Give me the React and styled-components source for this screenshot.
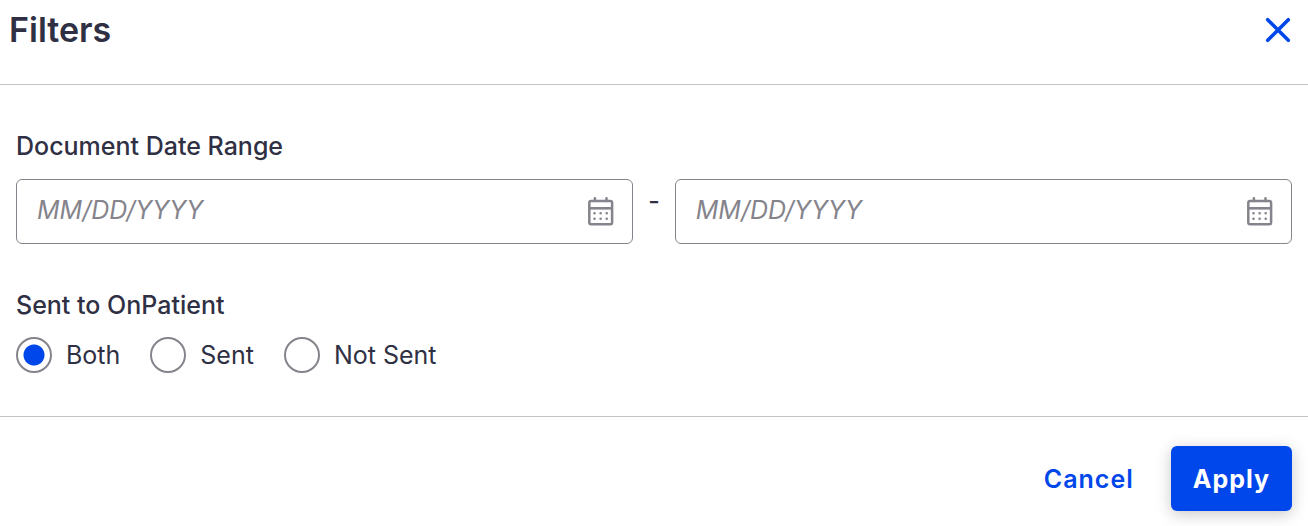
import styled, { createGlobalStyle } from 'styled-components';
import { useState } from 'react';

const SENT_OPTIONS = [
  { value: 'both', label: 'Both' },
  { value: 'sent', label: 'Sent' },
  { value: 'not-sent', label: 'Not Sent' },
];

const CloseIcon = () => (
  <svg width="26" height="26" viewBox="0 0 26 26" fill="none" aria-hidden="true">
    <path d="M2.7 2.7L23.3 23.3M23.3 2.7L2.7 23.3" stroke="currentColor" strokeWidth="3.6" strokeLinecap="round" />
  </svg>
);

const CalendarIcon = () => (
  <svg width="26" height="29" viewBox="0 0 26 29" fill="none" stroke="currentColor" aria-hidden="true">
    <rect x="1.3" y="4" width="22.8" height="23.2" rx="1.8" strokeWidth="2.5" />
    <path d="M1.3 11.3H24.1" strokeWidth="2.6" />
    <path d="M6.9 1.2V4M18.5 1.2V4" strokeWidth="2.5" strokeLinecap="round" />
    <path
      d="M6.5 16.3h.01M12.6 16.3h.01M18.7 16.3h.01M6.5 21.7h.01M12.6 21.7h.01M18.7 21.7h.01"
      strokeWidth="2.6"
      strokeLinecap="round"
    />
  </svg>
);

const DateField = ({ label }) => {
  const [date, setDate] = useState('');

  return (
    <DateBox>
      <DateInput
        aria-label={label}
        placeholder="MM/DD/YYYY"
        value={date}
        onChange={(e) => setDate(e.target.value)}
      />
      <IconButton type="button" aria-label={`Open ${label} calendar`}>
        <CalendarIcon />
      </IconButton>
    </DateBox>
  );
};

const App = () => {
  const [sent, setSent] = useState('both');

  return (
    <>
      <GlobalStyle />
      <Panel onSubmit={(e) => e.preventDefault()}>
        <Header>
          <Title>Filters</Title>
          <CloseButton type="button" aria-label="Close">
            <CloseIcon />
          </CloseButton>
        </Header>
        <Body>
          <Group>
            <Legend>Document Date Range</Legend>
            <DateRange>
              <DateField label="Start date" />
              <Dash>-</Dash>
              <DateField label="End date" />
            </DateRange>
          </Group>
          <Group>
            <Legend>Sent to OnPatient</Legend>
            <RadioList>
              {SENT_OPTIONS.map(({ value, label }) => (
                <RadioLabel key={value}>
                  <Radio
                    type="radio"
                    name="sent"
                    value={value}
                    checked={sent === value}
                    onChange={() => setSent(value)}
                  />
                  {label}
                </RadioLabel>
              ))}
            </RadioList>
          </Group>
        </Body>
        <Footer>
          <CancelButton type="button">Cancel</CancelButton>
          <ApplyButton type="submit">Apply</ApplyButton>
        </Footer>
      </Panel>
    </>
  );
};

export default App;

const GlobalStyle = createGlobalStyle`
  * {
    box-sizing: border-box;
  }

  body {
    margin: 0;
    background-color: #fff;
    color: #2f3044;
    font-family: Inter, sans-serif;
    font-size: 25px;
    line-height: 32px;
  }

  button,
  input {
    margin: 0;
    font: inherit;
  }
`;

const Panel = styled.form`
  width: 100%;
`;

const Header = styled.header`
  display: flex;
  align-items: flex-start;
  justify-content: space-between;
  height: 85px;
  padding: 8px 16px 0 9px;
  border-bottom: 1px solid #c3c2c9;
`;

const Title = styled.h1`
  margin: 0;
  font-size: 34px;
  font-weight: 600;
  line-height: 44px;
`;

const IconButton = styled.button`
  display: flex;
  flex-shrink: 0;
  padding: 0;
  border: 0;
  background: none;
  color: #85848c;
  cursor: pointer;
`;

const CloseButton = styled(IconButton)`
  padding: 9px 1px;
  color: #0047eb;
`;

const Body = styled.div`
  display: flex;
  flex-direction: column;
  gap: 45px;
  padding: 45px 16px 43px;
`;

const Group = styled.fieldset`
  min-width: 0;
  margin: 0;
  padding: 0;
  border: 0;
`;

const Legend = styled.legend`
  padding: 0;
  font-weight: 500;
`;

const DateRange = styled.div`
  display: flex;
  gap: 15px;
  padding-top: 17px;
`;

const DateBox = styled.div`
  display: flex;
  flex: 1;
  align-items: center;
  min-width: 0;
  height: 65px;
  padding: 0 18px 0 20px;
  border: 1px solid #85848c;
  border-radius: 6px;
`;

const DateInput = styled.input`
  flex: 1;
  min-width: 0;
  padding: 0 0 3px;
  border: 0;
  outline: 0;
  background: none;
  color: inherit;

  &::placeholder {
    color: #85848c;
    font-style: italic;
    opacity: 1;
  }
`;

const Dash = styled.span`
  padding-top: 6px;
  font-weight: 500;
`;

const RadioList = styled.div`
  display: flex;
  gap: 30px;
  padding-top: 16px;
`;

const RadioLabel = styled.label`
  display: flex;
  align-items: center;
  gap: 14px;
  height: 36px;
  cursor: pointer;
`;

const Radio = styled.input`
  width: 36px;
  height: 36px;
  border: 2px solid #85848c;
  border-radius: 50%;
  appearance: none;
  background-color: #fff;

  &:checked {
    background-image: radial-gradient(circle, #0047eb 10px, transparent 11px);
  }
`;

const Footer = styled.footer`
  display: flex;
  justify-content: flex-end;
  gap: 15px;
  padding: 29px 16px 15px;
  border-top: 1px solid #c3c2c9;
`;

const ActionButton = styled.button`
  height: 65px;
  padding: 0 22px;
  border: 0;
  border-radius: 6px;
  font-weight: 700;
  letter-spacing: 1px;
  cursor: pointer;
`;

const CancelButton = styled(ActionButton)`
  background: none;
  color: #0047eb;
  font-weight: 600;
`;

const ApplyButton = styled(ActionButton)`
  background-color: #0047eb;
  color: #fff;
  box-shadow: 0 3px 16px rgba(0, 0, 0, 0.22);
`;
